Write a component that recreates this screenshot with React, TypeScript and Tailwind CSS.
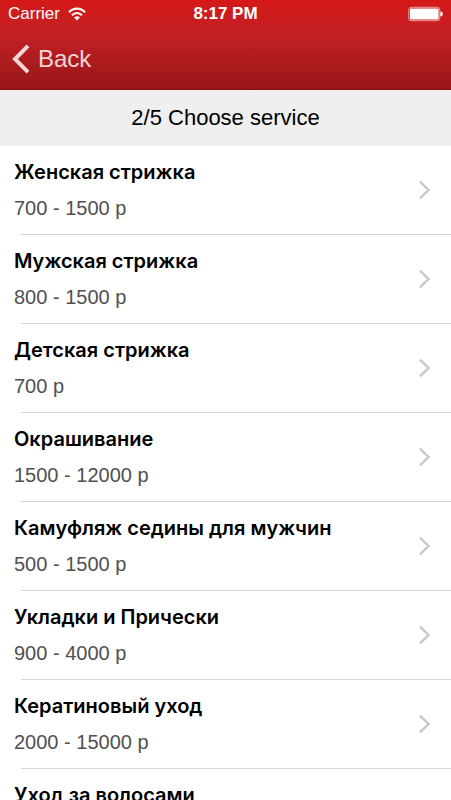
type Service = { id: number; title: string; price?: string };

const services: Service[] = [
  { id: 1, title: "Женская стрижка", price: "700 - 1500 р" },
  { id: 2, title: "Мужская стрижка", price: "800 - 1500 р" },
  { id: 3, title: "Детская стрижка", price: "700 р" },
  { id: 4, title: "Окрашивание", price: "1500 - 12000 р" },
  { id: 5, title: "Камуфляж седины для мужчин", price: "500 - 1500 р" },
  { id: 6, title: "Укладки и Прически", price: "900 - 4000 р" },
  { id: 7, title: "Кератиновый уход", price: "2000 - 15000 р" },
  { id: 8, title: "Уход за волосами" },
];

function WifiIcon() {
  return (
    <svg width="18" height="14" viewBox="0 0 18 14" fill="none" stroke="currentColor" strokeWidth="2.2" aria-hidden="true">
      <path d="M1 5.2C5.6 0.3 12.4 0.3 17 5.2" />
      <path d="M4 8.3C7 5.2 11 5.2 14 8.3" />
      <path d="M9 13.4L6.1 10.4C7.8 8.9 10.2 8.9 11.9 10.4Z" fill="currentColor" stroke="none" />
    </svg>
  );
}

function BatteryIcon() {
  return (
    <svg width="36" height="16" viewBox="0 0 36 16" aria-hidden="true">
      <rect x="1.8" y="1.3" width="31" height="13.4" rx="2.5" fill="none" stroke="#eda6a6" />
      <rect x="3" y="2.4" width="28.6" height="11.2" rx="1" fill="#fff" />
      <path d="M33.4 5.5C36.6 5.8 36.6 10.2 33.4 10.5Z" fill="#fff" />
    </svg>
  );
}

function StatusBar() {
  return (
    <div className="grid h-7 grid-cols-3 items-center px-2 text-[17px] leading-7 text-white">
      <div className="flex items-center gap-2">
        <span>Carrier</span>
        <WifiIcon />
      </div>
      <span className="text-center font-bold">8:17 PM</span>
      <div className="flex justify-end">
        <BatteryIcon />
      </div>
    </div>
  );
}

function ServiceRow({ service }: { service: Service }) {
  return (
    <li>
      <button type="button" className="flex h-22 w-full items-start justify-between pt-3 pr-5 pl-3.5 text-left">
        <span className="flex flex-col gap-2">
          <span className="font-['Inter','Liberation_Sans',sans-serif] text-xl leading-7 font-semibold text-black">
            {service.title}
          </span>
          {service.price && <span className="text-xl leading-7 text-[#505050]">{service.price}</span>}
        </span>
        <svg className="mt-[22px]" width="13" height="20" viewBox="0 0 13 20" fill="none" stroke="#c7c7cc" strokeWidth="2.4" aria-hidden="true">
          <path d="M2 1.7L10.5 10L2 18.3" />
        </svg>
      </button>
      <div className="ml-[21px] h-px bg-[#d6d6d8]" />
    </li>
  );
}

export default function App() {
  return (
    <div className="h-screen overflow-hidden bg-white font-['Liberation_Sans',Arial,sans-serif]">
      <header className="border-b border-[#8c0c10] bg-linear-to-b from-[#d51817] via-[#c22024] via-40% to-[#981718]">
        <StatusBar />
        <nav className="flex h-[61px] items-center px-3">
          <button type="button" className="flex items-center gap-2 text-2xl text-[#f5d5d7]">
            <svg width="18" height="30" viewBox="0 0 18 30" fill="none" stroke="currentColor" strokeWidth="4" aria-hidden="true">
              <path d="M16 1.8L3 15L16 28.2" />
            </svg>
            Back
          </button>
        </nav>
      </header>
      <main>
        <h1 className="bg-[#efefef] text-center text-[22px] leading-14 text-black">2/5 Choose service</h1>
        <ul>
          {services.map((s) => (
            <ServiceRow key={s.id} service={s} />
          ))}
        </ul>
      </main>
    </div>
  );
}
